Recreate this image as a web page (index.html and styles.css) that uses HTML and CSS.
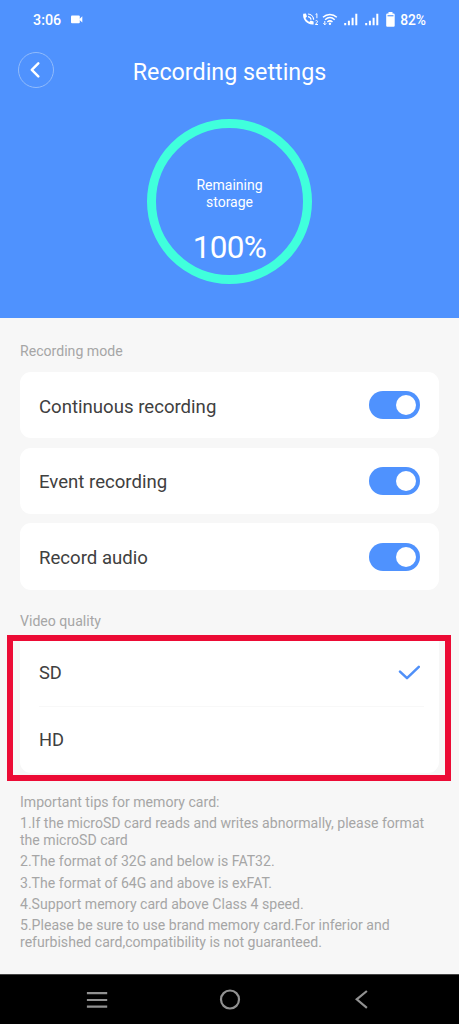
FILE: index.html
```html
<!DOCTYPE html>
<html lang="en">
<head>
<meta charset="utf-8">
<title>Recording settings</title>
<link rel="stylesheet" href="styles.css">
</head>
<body>
<div class="screen">
  <header class="hero">
    <div class="status">
      <div class="status-left">
        <span class="clock">3:06</span>
        <svg class="cam" width="12" height="9" viewBox="0 0 12 9"><rect x="0" y="0.5" width="8.8" height="7.8" rx="1" fill="#fff"/><path d="M8 4.4 11.3 1.3V7.5z" fill="#fff"/></svg>
      </div>
      <div class="status-right">
        <svg class="call" width="17" height="14" viewBox="0 0 17 14" fill="none" stroke="#fff"><path d="M1.2.8 3.9.6 5 3.6 3.5 5.1C4.2 6.8 5.6 8.1 7.2 8.9L8.7 7.5 11.6 8.6V11.5C5.6 12.4.2 6.5 1.2.8Z" fill="#fff" stroke="none"/><path d="M6 3.6A3.4 3.4 0 0 1 9 6.8M6 1A6 6 0 0 1 11.6 6.8" stroke-width="1.2"/><path d="M13.6 1.4 14.9.7V5.2M13.3 8.2C14 7 16 7.5 15.4 9L13.4 11.5H16" stroke-width="1"/></svg>
        <svg class="wifi" width="16" height="13" viewBox="0 0 16 13" fill="none" stroke="#fff" stroke-width="1.5"><path d="M1 4.3C4.9.6 10.8.6 14.8 4.3M3.1 6.7C6 4.1 9.8 4.1 12.7 6.7M5.3 9C7 7.6 8.9 7.6 10.5 9"/><circle cx="7.9" cy="10.8" r="1.2" fill="#fff" stroke="none"/><path d="M2.8 8v3.8M1.3 10.3l1.5 1.5 1.5-1.5" stroke-width="1"/></svg>
        <svg class="signal" width="14" height="13" viewBox="0 0 14 13" fill="#fff"><path d="M.2 10h2v2.3h-2zM3.9 7.7h2v4.6h-2zM7.6 4.8h2v7.5h-2zM11.3.7h2v11.6h-2z"/></svg>
        <svg class="signal two" width="14" height="13" viewBox="0 0 14 13" fill="#fff"><path d="M.2 10h2v2.3h-2zM3.9 7.7h2v4.6h-2zM7.6 4.8h2v7.5h-2zM11.3.7h2v11.6h-2z"/></svg>
        <svg class="battery" width="9" height="15" viewBox="0 0 9 15"><path d="M2.5 0h4v1.6h1.1q1.1 0 1.1 1.1v11q0 1.1-1.1 1.1H1.3Q.2 14.8.2 13.7V2.7Q.2 1.6 1.3 1.6H2.5z" fill="#fff"/><path d="M1.5 3h6v1.4h-6z" fill="#6ca6ff"/></svg>
        <span class="percent">82%</span>
      </div>
    </div>
    <div class="titlebar">
      <div class="back"><svg width="10" height="16" viewBox="0 0 10 16" fill="none" stroke="#fff" stroke-width="2.4" stroke-linecap="round" stroke-linejoin="round"><path d="M8.3 1.3 1.8 7.8 8.3 14.4"/></svg></div>
      <h1 class="title">Recording settings</h1>
    </div>
    <div class="ring">
      <div class="ring-label">Remaining<br>storage</div>
      <div class="ring-value">100%</div>
    </div>
  </header>
  <main class="content">
    <h2 class="section">Recording mode</h2>
    <div class="cards">
      <div class="card"><span>Continuous recording</span><i class="toggle"></i></div>
      <div class="card"><span>Event recording</span><i class="toggle"></i></div>
      <div class="card"><span>Record audio</span><i class="toggle"></i></div>
    </div>
    <h2 class="section video">Video quality</h2>
    <div class="highlight">
      <div class="options">
        <div class="option first"><span>SD</span><svg width="22" height="15" viewBox="0 0 22 15" fill="none" stroke="#5090f8" stroke-width="2.5" stroke-linecap="round" stroke-linejoin="round"><path d="M2 6.6 9 13.2 20.8 1.8"/></svg></div>
        <div class="option"><span>HD</span></div>
      </div>
    </div>
    <div class="tips">
      <p>Important tips for memory card:</p>
      <p>1.If the microSD card reads and writes abnormally, please format<br>the microSD card</p>
      <p>2.The format of 32G and below is FAT32.</p>
      <p>3.The format of 64G and above is exFAT.</p>
      <p>4.Support memory card above Class 4 speed.</p>
      <p>5.Please be sure to use brand memory card.For inferior and<br>refurbished card,compatibility is not guaranteed.</p>
    </div>
  </main>
  <nav class="nav">
    <svg width="22" height="18" viewBox="0 0 22 18" stroke="#919191" stroke-width="2.2"><path d="M.9 2.2h20.3M.9 9h20.3M.9 15.6h20.3"/></svg>
    <svg width="22" height="22" viewBox="0 0 22 22" fill="none" stroke="#919191" stroke-width="2.2"><circle cx="11" cy="10.5" r="9"/></svg>
    <svg width="14" height="20" viewBox="0 0 14 20" fill="none" stroke="#919191" stroke-width="2.2"><path d="M11.9 1 1.7 9.3l10.2 8.5"/></svg>
  </nav>
</div>
</body>
</html>
```
FILE: styles.css
```css
* { box-sizing: border-box; margin: 0; padding: 0; }
body { font-family: Roboto, "Liberation Sans", sans-serif; background: #f7f7f7; }
svg { display: block; flex: none; }
.screen { width: 459px; height: 1024px; display: flex; flex-direction: column; overflow: hidden; white-space: nowrap; }
.hero { height: 318px; flex: none; background: #4f92fe; color: #fff; display: flex; flex-direction: column; }
.status { height: 40px; padding: 0 33px; display: flex; justify-content: space-between; }
.status-left, .status-right { display: flex; align-items: center; height: 39px; }
.clock { font-size: 14.3px; font-weight: 500; }
.cam { margin-left: 10px; }
.wifi { margin-left: 3px; }
.signal { margin-left: 6px; }
.two { margin-left: 7px; }
.battery { margin: 0 5px 0 7px; }
.percent { font-size: 13.8px; font-weight: 500; }
.titlebar { height: 62px; padding: 12px 18px 0; display: grid; grid-template-columns: 36px 1fr 36px; align-items: start; }
.back { width: 36px; height: 36px; border: 1px solid #91bbfb; border-radius: 50%; display: flex; align-items: center; justify-content: center; padding-right: 2px; }
.title { font-size: 23.3px; line-height: 27px; font-weight: 400; text-align: center; padding-top: 7px; }
.ring { width: 165px; height: 165px; margin: 17px auto 0; border: 9px solid #40ffdc; border-radius: 50%; text-align: center; padding-top: 49px; }
.ring-label { font-size: 14px; line-height: 16.5px; }
.ring-value { font-size: 31.5px; line-height: 36px; margin-top: 20px; letter-spacing: -0.7px; }
.content { flex: 1; padding: 25px 20px 0; }
.section { font-size: 14.1px; line-height: 17px; font-weight: 400; color: #a6a6a6; }
.cards { display: grid; gap: 9.3px; margin-top: 12px; }
.card { height: 66.4px; border-radius: 11px; background: #fff; padding: 0 19px; display: flex; align-items: center; justify-content: space-between; font-size: 18.6px; color: #404040; }
.card span { padding-top: 3px; }
.toggle { width: 51.5px; height: 28px; border-radius: 14px; background: #4f92fe; display: flex; align-items: center; justify-content: flex-end; padding-right: 4px; }
.toggle::after { content: ""; width: 20px; height: 20px; border-radius: 50%; background: #fff; }
.video { margin-top: 23px; }
.highlight { margin: 5px -12px 0 -13px; height: 146px; border: 6px solid #ec0b35; padding: 0 6px 2px 7px; }
.options { height: 132px; background: #fff; border-radius: 0 0 11px 11px; padding: 0 15px 0 19px; font-size: 18.3px; color: #404040; }
.option { height: 66px; display: flex; justify-content: space-between; align-items: center; padding-right: 4px; }
.first { border-bottom: 1px solid #f8f8f8; padding-bottom: 1px; }
.tips { margin-top: 13px; font-size: 14.08px; line-height: 16.6px; color: #a6a6a6; display: grid; gap: 4.8px; }
.nav { height: 50px; flex: none; background: #000; border-top: 1px solid #444; display: grid; grid-template-columns: 194px 71px 194px; align-items: center; justify-items: center; }
```
